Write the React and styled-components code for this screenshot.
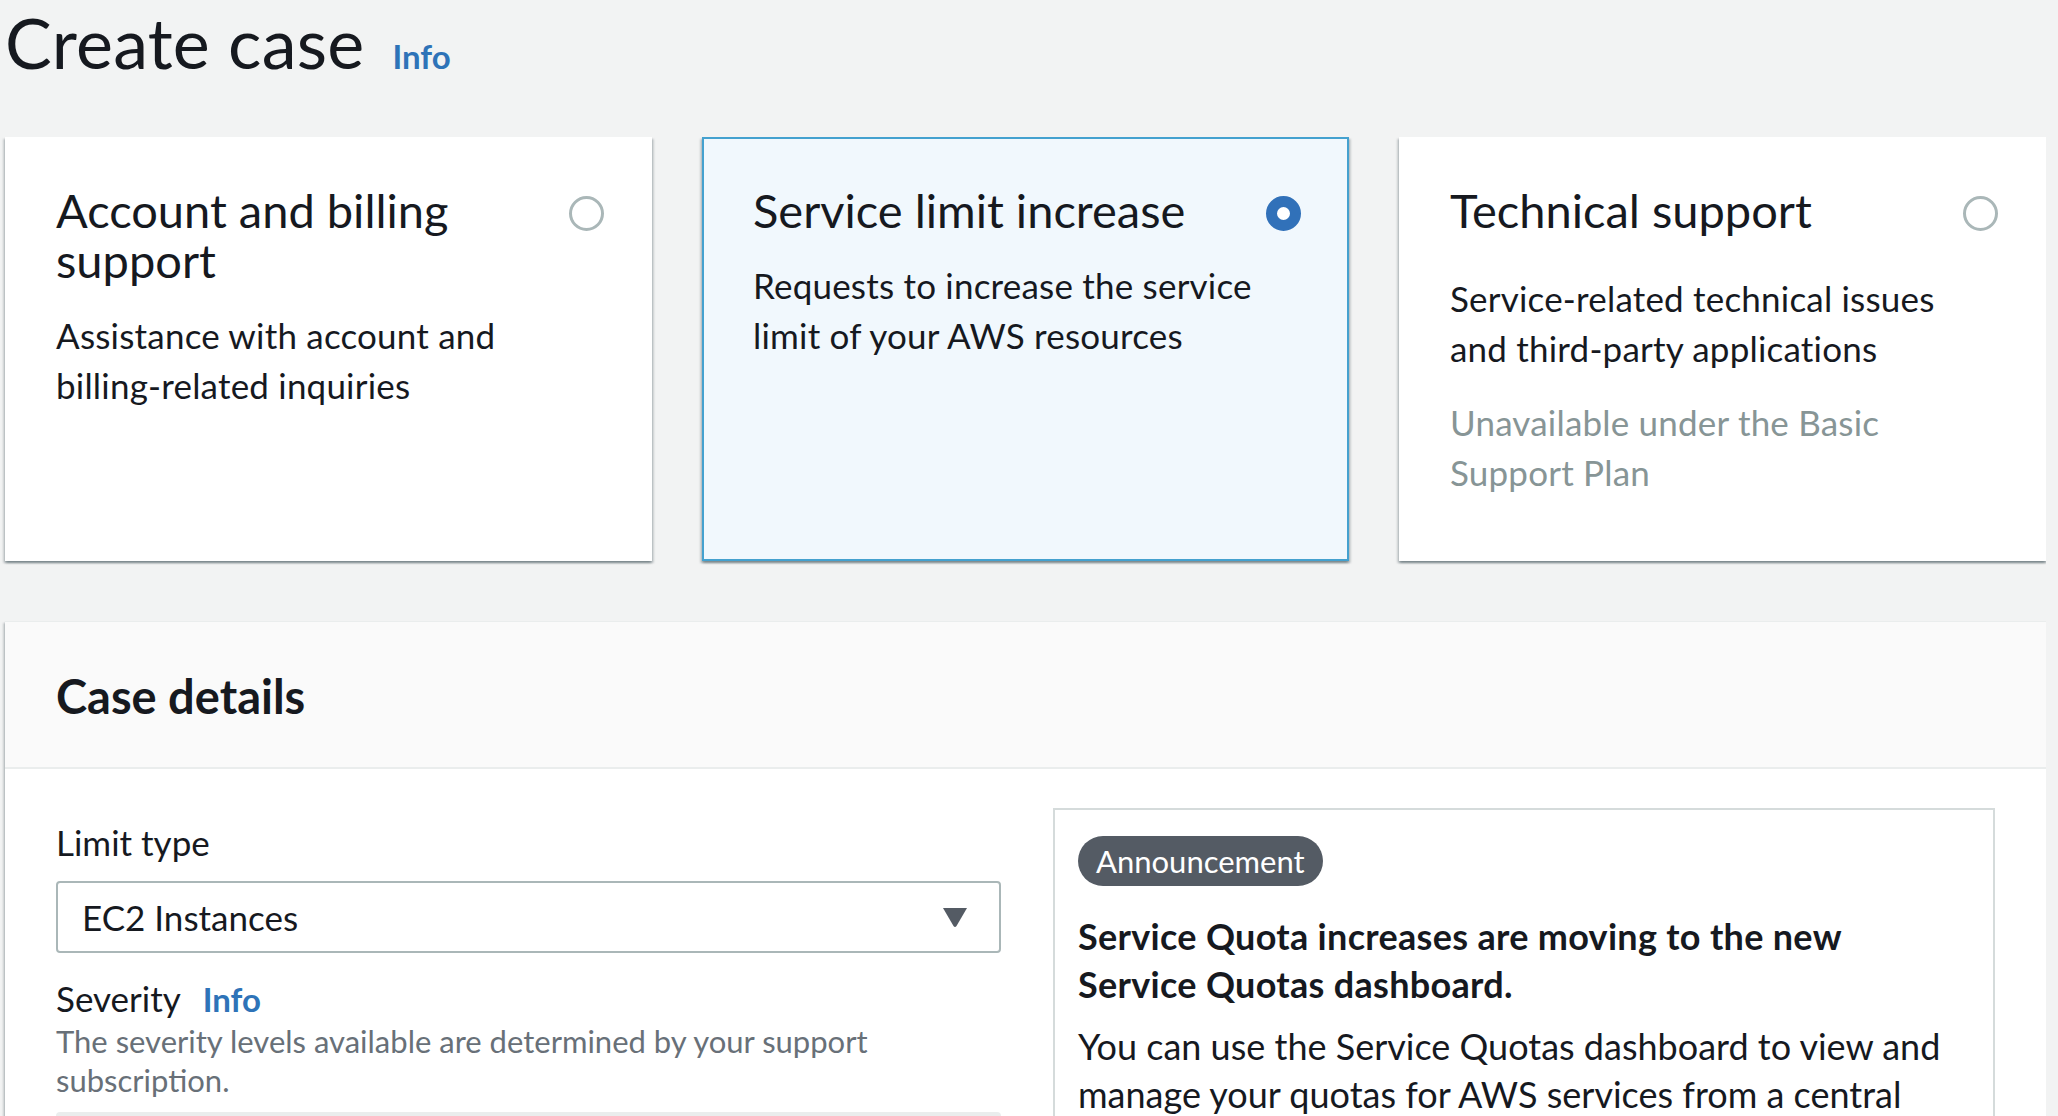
import React from "react";
import styled, { createGlobalStyle } from "styled-components";

const Global = createGlobalStyle`
  html, body { margin: 0; padding: 0; background: #f2f3f3; }
  body { font-family: Lato, "Liberation Sans", sans-serif; color: #16191f; overflow: hidden; }
  * { box-sizing: border-box; }
`;

const Page = styled.div`
  width: 2046px;
  padding-left: 5px;
  height: 1116px;
  overflow: hidden;
`;

const Header = styled.div`
  display: flex;
  align-items: baseline;
  gap: 28px;
  height: 137px;
`;

const Title = styled.h1`
  margin: 0;
  font-size: 70px;
  font-weight: 400;
  line-height: 84px;
  letter-spacing: 0.2px;
`;

const InfoLink = styled.a`
  color: #2e73b8;
  font-weight: 700;
  font-size: ${(p) => p.$size || 33}px;
  text-decoration: none;
`;

const CardRow = styled.div`
  display: grid;
  grid-template-columns: repeat(3, 647px);
  gap: 50px;
`;

const Card = styled.div`
  height: 424px;
  background: ${(p) => (p.$selected ? "#f1f8fd" : "#ffffff")};
  border: 2px solid ${(p) => (p.$selected ? "#44a1cf" : "transparent")};
  box-shadow: 0 2px 2px 0 rgba(0, 28, 36, 0.3), 2px 2px 2px 0 rgba(0, 28, 36, 0.15),
    -2px 2px 2px 0 rgba(0, 28, 36, 0.15);
  padding: 46px 46px 0 49px;
  display: flex;
  flex-direction: column;
`;

const CardTop = styled.div`
  display: flex;
  justify-content: space-between;
  align-items: flex-start;
  gap: 20px;
`;

const CardTitle = styled.div`
  font-size: 47px;
  line-height: 50px;
  max-width: 480px;
`;

const Radio = styled.span`
  flex: none;
  width: 35px;
  height: 35px;
  margin-top: 11px;
  border-radius: 50%;
  border: ${(p) => (p.$checked ? "11px solid #3171b9" : "3px solid #aab7b8")};
  background: #fff;
`;

const CardText = styled.div`
  font-size: 35px;
  line-height: 50px;
  max-width: 520px;
  letter-spacing: 0.2px;
  margin-top: ${(p) => p.$mt || 25}px;
  color: ${(p) => (p.$muted ? "#879596" : "#16191f")};
`;

const Panel = styled.div`
  margin-top: 60px;
  background: #fff;
  border-top: 1px solid #eaeded;
  box-shadow: 0 2px 2px 0 rgba(0, 28, 36, 0.3), 2px 2px 2px 0 rgba(0, 28, 36, 0.15),
    -2px 2px 2px 0 rgba(0, 28, 36, 0.15);
`;

const PanelHeader = styled.div`
  height: 147px;
  background: #fafafa;
  border-bottom: 2px solid #eaeded;
  padding: 0 51px;
  display: flex;
  align-items: center;
`;

const PanelTitle = styled.h2`
  margin: 0;
  font-size: 47px;
  font-weight: 700;
  line-height: 50px;
  padding-top: 3px;
`;

const PanelBody = styled.div`
  display: grid;
  grid-template-columns: 945px 942px;
  gap: 52px;
  padding: 39px 51px 0 51px;
`;

const FieldColumn = styled.div`
  padding-top: 11px;
`;

const Label = styled.div`
  font-size: 35px;
  line-height: 46px;
  display: flex;
  align-items: baseline;
  gap: 22px;
  margin-top: ${(p) => p.$mt || 0}px;
`;

const Select = styled.div`
  margin-top: 16px;
  height: 72px;
  border: 2px solid #aab7b8;
  border-radius: 4px;
  display: flex;
  align-items: center;
  justify-content: space-between;
  padding: 0 30px 0 24px;
  font-size: 35px;
  background: #fff;
`;

const Caret = styled.svg`
  width: 28px;
  height: 22px;
`;

const Hint = styled.div`
  font-size: 31px;
  line-height: 39px;
  color: #687078;
  max-width: 880px;
`;

const GreyInput = styled.div`
  margin-top: 12px;
  height: 72px;
  background: #eaeded;
  border-radius: 4px;
`;

const AnnounceBox = styled.div`
  border: 2px solid #d5dbdb;
  padding: 26px 23px 40px 23px;
  height: 400px;
`;

const Badge = styled.span`
  display: inline-flex;
  align-items: center;
  height: 50px;
  padding: 0 18px;
  border-radius: 25px;
  background: #545b64;
  color: #fff;
  font-size: 31px;
`;

const AnnounceHead = styled.div`
  margin-top: 26px;
  font-size: 36px;
  font-weight: 700;
  line-height: 48px;
  letter-spacing: 0.3px;
  max-width: 820px;
`;

const AnnounceText = styled.div`
  margin-top: 14px;
  font-size: 36px;
  line-height: 48px;
`;

const cards = [
  {
    title: "Account and billing support",
    text: "Assistance with account and billing-related inquiries",
  },
  {
    title: "Service limit increase",
    text: "Requests to increase the service limit of your AWS resources",
    selected: true,
  },
  {
    title: "Technical support",
    text: "Service-related technical issues and third-party applications",
    mt: 38,
    muted: "Unavailable under the Basic Support Plan",
  },
];

export default function App() {
  return (
    <>
      <Global />
      <Page>
        <Header>
          <Title>Create case</Title>
          <InfoLink href="#">Info</InfoLink>
        </Header>
        <CardRow>
          {cards.map((c) => (
            <Card key={c.title} $selected={c.selected}>
              <CardTop>
                <CardTitle>{c.title}</CardTitle>
                <Radio $checked={c.selected} />
              </CardTop>
              <CardText $mt={c.mt}>{c.text}</CardText>
              {c.muted && (
                <CardText $muted $mt={24}>
                  {c.muted}
                </CardText>
              )}
            </Card>
          ))}
        </CardRow>
        <Panel>
          <PanelHeader>
            <PanelTitle>Case details</PanelTitle>
          </PanelHeader>
          <PanelBody>
            <FieldColumn>
              <Label>Limit type</Label>
              <Select>
                <span>EC2 Instances</span>
                <Caret viewBox="0 0 28 22">
                  <path d="M2 2 H26 L15.5 20 Q14 22 12.5 20 Z" fill="#545b64" />
                </Caret>
              </Select>
              <Label $mt={22}>
                Severity <InfoLink href="#" $size={33}>Info</InfoLink>
              </Label>
              <Hint>
                The severity levels available are determined by your support subscription.
              </Hint>
              <GreyInput />
            </FieldColumn>
            <AnnounceBox>
              <Badge>Announcement</Badge>
              <AnnounceHead>
                Service Quota increases are moving to the new Service Quotas dashboard.
              </AnnounceHead>
              <AnnounceText>
                You can use the Service Quotas dashboard to view and manage your quotas for AWS
                services from a central location.
              </AnnounceText>
            </AnnounceBox>
          </PanelBody>
        </Panel>
      </Page>
    </>
  );
}
